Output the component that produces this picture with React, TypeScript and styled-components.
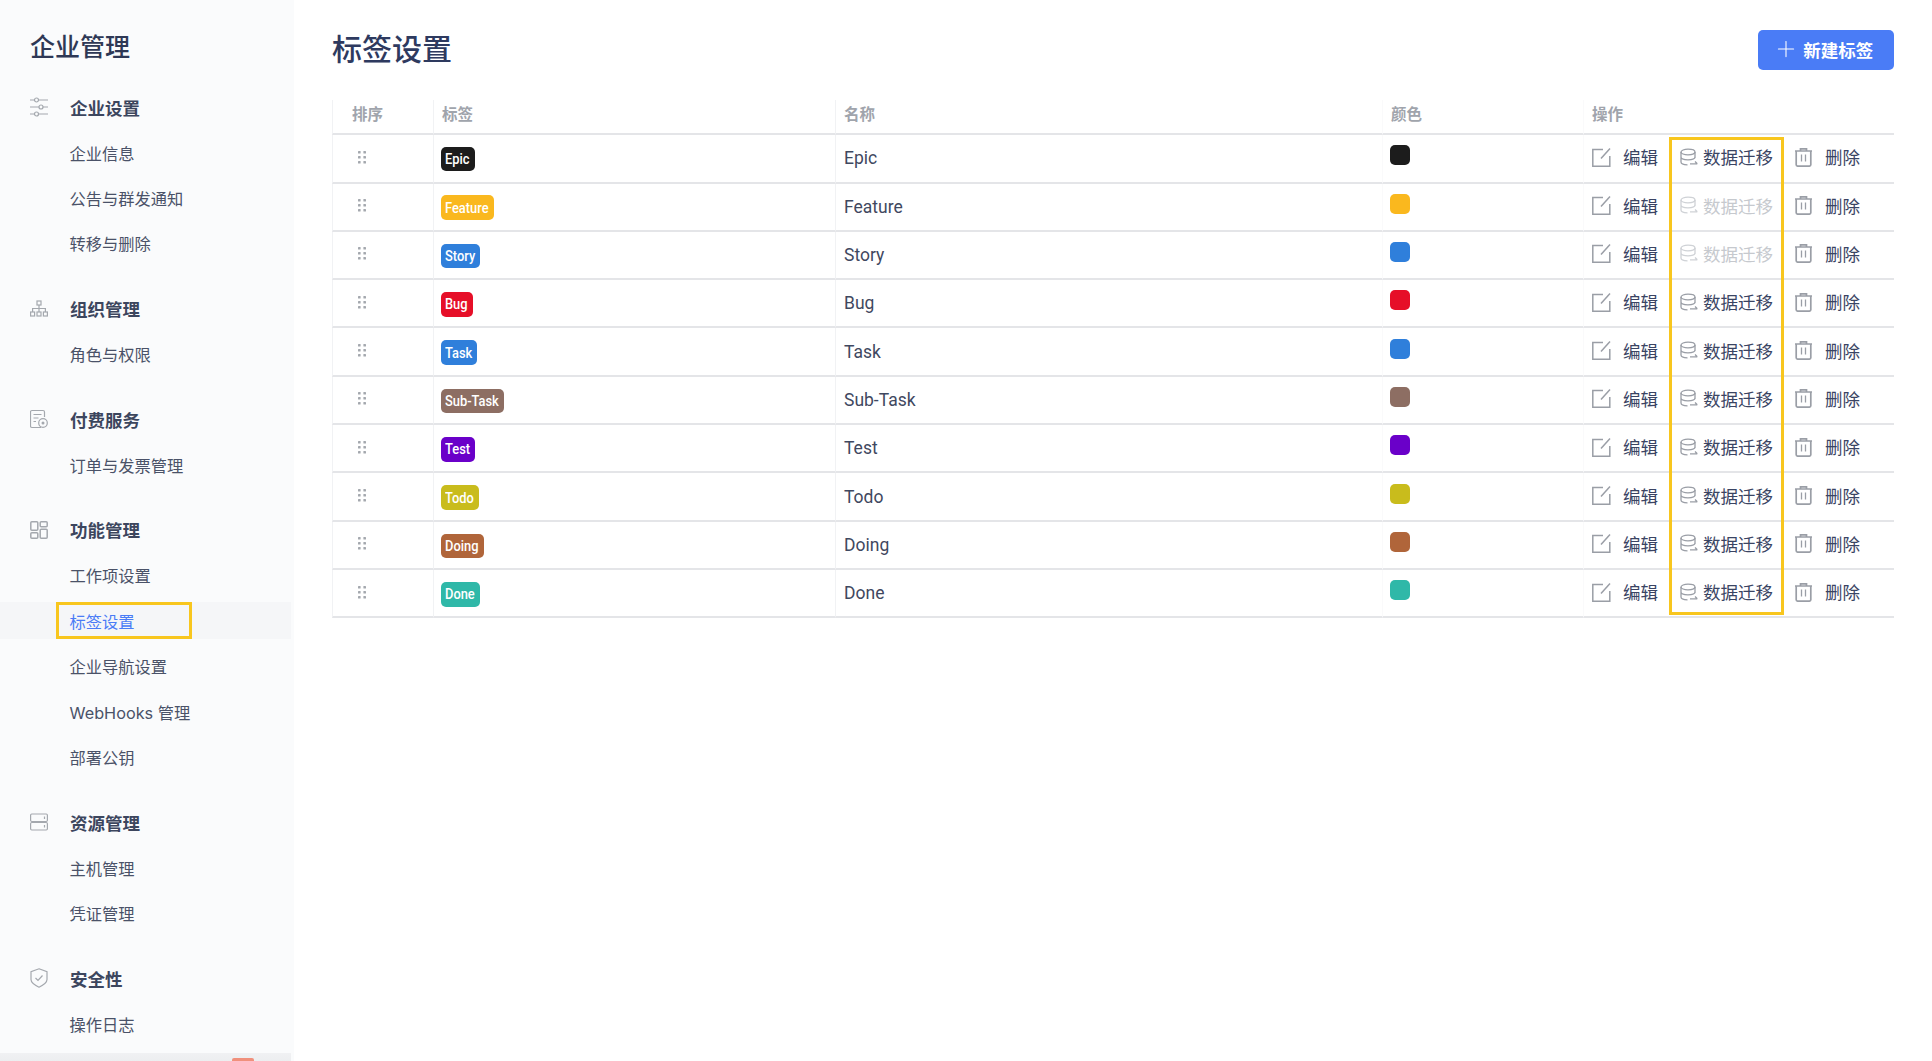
import React from 'react';
import styled, { createGlobalStyle } from 'styled-components';
import { Plus } from 'lucide-react';

const Global = createGlobalStyle`
  html, body {
    margin: 0;
    padding: 0;
    height: 100%;
    background: #fff;
    overflow: hidden;
  }
  * { box-sizing: border-box; }
`;

const Page = styled.div`
  display: flex;
  width: 1932px;
  height: 1061px;
  overflow: hidden;
  font-family: Roboto, "Noto Sans CJK SC", sans-serif;
  color: #3a4463;
`;

/* ---- sidebar ---- */

const Sidebar = styled.aside`
  position: relative;
  flex: 0 0 294px;
  height: 100%;
  padding: 29px 3px 0 0;
  background: #fafbfc;
  overflow: hidden;
`;

const SideTitle = styled.h1`
  margin: 0 0 21.5px 30px;
  font-size: 25px;
  line-height: 38px;
  font-weight: 500;
  color: #2e3855;
`;

const Section = styled.section`
  display: flex;
  flex-direction: column;
  gap: 8px;
  margin-bottom: 27.9px;
`;

const SectionHead = styled.div`
  display: flex;
  align-items: center;
  gap: 22px;
  height: 37.4px;
  padding-left: 30px;
  font-size: 17.5px;
  font-weight: 700;
  color: #3c465e;
`;

const NavItem = styled.div<{ $active?: boolean }>`
  position: relative;
  display: flex;
  align-items: center;
  height: 37.4px;
  padding-left: 69.5px;
  font-size: 16.25px;
  font-family: Inter, "Noto Sans CJK SC", sans-serif;
  color: ${({ $active }) => ($active ? '#4a7cf6' : '#4a5268')};
  background: ${({ $active }) => ($active ? '#f5f6f8' : 'transparent')};
`;

const Callout = styled.span`
  position: absolute;
  left: 56px;
  top: 0;
  width: 136px;
  height: 100%;
  border: 3px solid #f8c61e;
`;

const BottomFade = styled.div`
  position: absolute;
  left: 0;
  right: 3px;
  bottom: 0;
  height: 8px;
  background: linear-gradient(to bottom, #f0f1f3, #eceef0);
`;

const BottomDot = styled.span`
  position: absolute;
  left: 232px;
  bottom: 0;
  width: 22px;
  height: 3px;
  background: #f0907c;
  border-radius: 2px 2px 0 0;
`;

/* ---- main ---- */

const Main = styled.main`
  flex: 1;
  min-width: 0;
  padding: 30px 38px 0 38px;
`;

const Header = styled.header`
  display: flex;
  align-items: center;
  justify-content: space-between;
  height: 40px;
  margin-bottom: 30px;
`;

const PageTitle = styled.h2`
  margin: 0;
  font-size: 30px;
  line-height: 38px;
  font-weight: 500;
  color: #2e3a5f;
`;

const CreateButton = styled.button`
  display: flex;
  align-items: center;
  justify-content: center;
  gap: 4.5px;
  width: 136px;
  height: 40px;
  padding: 0 6px 2px 0;
  border: 0;
  border-radius: 5px;
  background: #4a7cf6;
  color: #fff;
  font-family: inherit;
  font-size: 17.5px;
  font-weight: 700;
`;

const TableWrap = styled.div`
  position: relative;
`;

const Table = styled.table`
  width: 100%;
  border-collapse: separate;
  border-spacing: 0;
  table-layout: fixed;
`;

const Th = styled.th<{ $w?: number; $pl?: number; $faint?: boolean }>`
  width: ${({ $w }) => ($w ? `${$w}px` : 'auto')};
  height: 34.5px;
  padding: 0 0 7px ${({ $pl }) => $pl ?? 8}px;
  text-align: left;
  font-size: 15.5px;
  font-weight: 700;
  color: #a0a4ac;
  border-bottom: 2px solid #e4e5e8;
  border-left: 1px solid ${({ $faint }) => ($faint ? '#fafafb' : '#f1f2f4')};
`;

const Row = styled.tr`
  height: 48.33px;

  &:first-child {
    height: 49px;
  }
`;

const Td = styled.td<{ $pl?: number; $faint?: boolean }>`
  padding: 0 0 0 ${({ $pl }) => $pl ?? 8}px;
  border-bottom: 2px solid #e4e5e8;
  border-left: 1px solid ${({ $faint }) => ($faint ? '#fafafb' : '#f1f2f4')};
  font-size: 17.5px;
  color: #3f4860;
  vertical-align: middle;
`;

const Handle = styled.svg`
  display: block;
  margin-top: -2px;
`;

const Tag = styled.span<{ $color: string; $w: number }>`
  display: inline-flex;
  align-items: center;
  width: ${({ $w }) => $w}px;
  height: 24.5px;
  padding-left: 4px;
  margin-top: 2px;
  border-radius: 5px;
  background: ${({ $color }) => $color};
  color: #fff;
  vertical-align: middle;
`;

const TagLabel = styled.span`
  display: block;
  flex: none;
  font-size: 15.5px;
  font-weight: 500;
  transform: scaleX(0.83);
  transform-origin: left center;
  white-space: nowrap;
`;

const Swatch = styled.span<{ $color: string }>`
  display: block;
  width: 20px;
  height: 20px;
  margin-top: -6px;
  border-radius: 5px;
  background: ${({ $color }) => $color};
`;

const Actions = styled.div`
  display: flex;
  align-items: center;
  gap: 22px;
`;

const Action = styled.span<{ $gap: number; $off?: boolean }>`
  display: inline-flex;
  align-items: center;
  gap: ${({ $gap }) => $gap}px;
  color: ${({ $off }) => ($off ? '#c6c9ce' : '#3a4463')};
  font-size: 17.5px;
  line-height: 24px;

  svg {
    margin-top: -2px;
  }
`;

const MigrateBox = styled.div`
  position: absolute;
  left: 1337px;
  top: 37px;
  width: 115px;
  height: 478px;
  border: 3px solid #f8c61e;
  pointer-events: none;
`;

/* ---- drawings ---- */

const NavSvg = ({ children }: { children: React.ReactNode }) => (
  <svg width="18" height="20" viewBox="0 0 18 20" fill="none" stroke="#a4a8ae" strokeWidth="1.2">
    {children}
  </svg>
);

const SlidersIcon = () => (
  <NavSvg>
    <path d="M0 3h4.500M8.500 3H18M0 10h9M13 10h5M0 17h4.500M8.500 17H18" />
    <circle cx="6.500" cy="3" r="2" />
    <circle cx="11" cy="10" r="2" />
    <circle cx="6.500" cy="17" r="2" />
  </NavSvg>
);

const OrgIcon = () => (
  <NavSvg>
    <rect x="7" y="2" width="4" height="4" />
    <rect x="0.600" y="13" width="4" height="4" />
    <rect x="7" y="13" width="4" height="4" />
    <rect x="13.400" y="13" width="4" height="4" />
    <path d="M9 6v7M2.600 13v-3.500h12.800V13" />
  </NavSvg>
);

const BillIcon = () => (
  <NavSvg>
    <path d="M11 18.500H2a1.500 1.500 0 0 1-1.500-1.500V3A1.500 1.500 0 0 1 2 1.500h11A1.500 1.500 0 0 1 14.500 3v5" />
    <path d="M3.500 5.500h8M3.500 9h5M3.500 12.500h2.500" />
    <circle cx="13" cy="14" r="4.300" />
    <circle cx="13" cy="14" r="1.500" fill="#a4a8ae" stroke="none" />
  </NavSvg>
);

const GridIcon = () => (
  <NavSvg>
    <g strokeWidth="1.500">
      <rect x="0.800" y="1.800" width="7" height="8.500" rx="1" />
      <rect x="10.200" y="1.800" width="7" height="5" rx="1" />
      <rect x="0.800" y="12.800" width="7" height="5.500" rx="1" />
      <rect x="10.200" y="9.300" width="7" height="9" rx="1" />
    </g>
  </NavSvg>
);

const ServerIcon = () => (
  <NavSvg>
    <rect x="0.600" y="2" width="16.800" height="7.500" rx="1.200" />
    <rect x="0.600" y="10.500" width="16.800" height="7.500" rx="1.200" />
    <path d="M14.500 4.500v2.500M14.500 13v2.500" />
  </NavSvg>
);

const ShieldIcon = () => (
  <NavSvg>
    <path d="M9 .800 17 3.600v8c0 3-3.500 5.500-8 7.600-4.500-2.100-8-4.600-8-7.600v-8z" />
    <path d="m5.500 10 2.500 2.500 4.500-5" />
  </NavSvg>
);

const HandleIcon = () => (
  <Handle width="8" height="13" viewBox="0 0 8 13" fill="#a4a8ae">
    {[0, 5, 10].map((y) => (
      <React.Fragment key={y}>
        <rect x="0" y={y} width="2.600" height="2.600" rx="0.600" />
        <rect x="5.400" y={y} width="2.600" height="2.600" rx="0.600" />
      </React.Fragment>
    ))}
  </Handle>
);

const EditIcon = () => (
  <svg width="19" height="19" viewBox="0 0 19 19" fill="none" stroke="#9a9ea6" strokeWidth="1.500">
    <path d="M11 1.500H.800v16.700h17V8" />
    <path d="M9 10.500 18 .500" />
  </svg>
);

const MigrateIcon = ({ off }: { off?: boolean }) => (
  <svg width="18" height="19" viewBox="0 0 18 19" fill="none" stroke={off ? '#cfd2d6' : '#9a9ea6'} strokeWidth="1.300">
    <ellipse cx="8" cy="4" rx="7" ry="2.800" />
    <path d="M1 4v10c0 1.600 2.800 2.800 6.500 2.800M15 4v6M1 9c0 1.600 3 2.800 7 2.800s7-1.200 7-2.800" />
    <path d="M10 15.800h7.300M15 13.500l2.300 2.300" />
  </svg>
);

const TrashIcon = () => (
  <svg width="17" height="19" viewBox="0 0 17 19" fill="none" stroke="#9a9ea6" strokeWidth="1.700">
    <path d="M0 3h17M5.500 3V.900h6V3" />
    <path d="M1.200 3v13.800a1.300 1.300 0 0 0 1.300 1.300h12a1.300 1.300 0 0 0 1.300-1.300V3" />
    <path d="M6.500 6.500v7M10.500 6.500v7" strokeWidth="1.300" />
  </svg>
);

/* ---- data ---- */

const nav = [
  { title: '企业设置', icon: <SlidersIcon />, items: ['企业信息', '公告与群发通知', '转移与删除'] },
  { title: '组织管理', icon: <OrgIcon />, items: ['角色与权限'] },
  { title: '付费服务', icon: <BillIcon />, items: ['订单与发票管理'] },
  { title: '功能管理', icon: <GridIcon />, items: ['工作项设置', '标签设置', '企业导航设置', 'WebHooks 管理', '部署公钥'] },
  { title: '资源管理', icon: <ServerIcon />, items: ['主机管理', '凭证管理'] },
  { title: '安全性', icon: <ShieldIcon />, items: ['操作日志'] },
];

const tags = [
  { name: 'Epic', color: '#1c1c1c', w: 34 },
  { name: 'Feature', color: '#fab81e', w: 53, off: true },
  { name: 'Story', color: '#2f7fdb', w: 39, off: true },
  { name: 'Bug', color: '#e60f28', w: 32 },
  { name: 'Task', color: '#2f7fdb', w: 36 },
  { name: 'Sub-Task', color: '#8d6e63', w: 63 },
  { name: 'Test', color: '#6a00c9', w: 34 },
  { name: 'Todo', color: '#c9bc1c', w: 38 },
  { name: 'Doing', color: '#b0653a', w: 43 },
  { name: 'Done', color: '#2fb8a8', w: 39 },
];

export default function App() {
  return (
    <Page>
      <Global />
      <Sidebar>
        <SideTitle>企业管理</SideTitle>
        {nav.map((group) => (
          <Section key={group.title}>
            <SectionHead>
              {group.icon}
              {group.title}
            </SectionHead>
            {group.items.map((item) => (
              <NavItem key={item} $active={item === '标签设置'}>
                {item}
                {item === '标签设置' && <Callout />}
              </NavItem>
            ))}
          </Section>
        ))}
        <BottomFade />
        <BottomDot />
      </Sidebar>
      <Main>
        <Header>
          <PageTitle>标签设置</PageTitle>
          <CreateButton>
            <Plus size={26} strokeWidth={1} />
            新建标签
          </CreateButton>
        </Header>
        <TableWrap>
          <Table>
            <thead>
              <tr>
                <Th $w={101} $pl={19}>排序</Th>
                <Th $w={402}>标签</Th>
                <Th $w={547}>名称</Th>
                <Th $w={201} $faint>颜色</Th>
                <Th $faint>操作</Th>
              </tr>
            </thead>
            <tbody>
              {tags.map((tag) => (
                <Row key={tag.name}>
                  <Td $pl={25}><HandleIcon /></Td>
                  <Td $pl={7}><Tag $color={tag.color} $w={tag.w}><TagLabel>{tag.name}</TagLabel></Tag></Td>
                  <Td>{tag.name}</Td>
                  <Td $pl={7} $faint><Swatch $color={tag.color} /></Td>
                  <Td $faint>
                    <Actions>
                      <Action $gap={12}><EditIcon />编辑</Action>
                      <Action $gap={5} $off={tag.off}><MigrateIcon off={tag.off} />数据迁移</Action>
                      <Action $gap={13}><TrashIcon />删除</Action>
                    </Actions>
                  </Td>
                </Row>
              ))}
            </tbody>
          </Table>
          <MigrateBox />
        </TableWrap>
      </Main>
    </Page>
  );
}
